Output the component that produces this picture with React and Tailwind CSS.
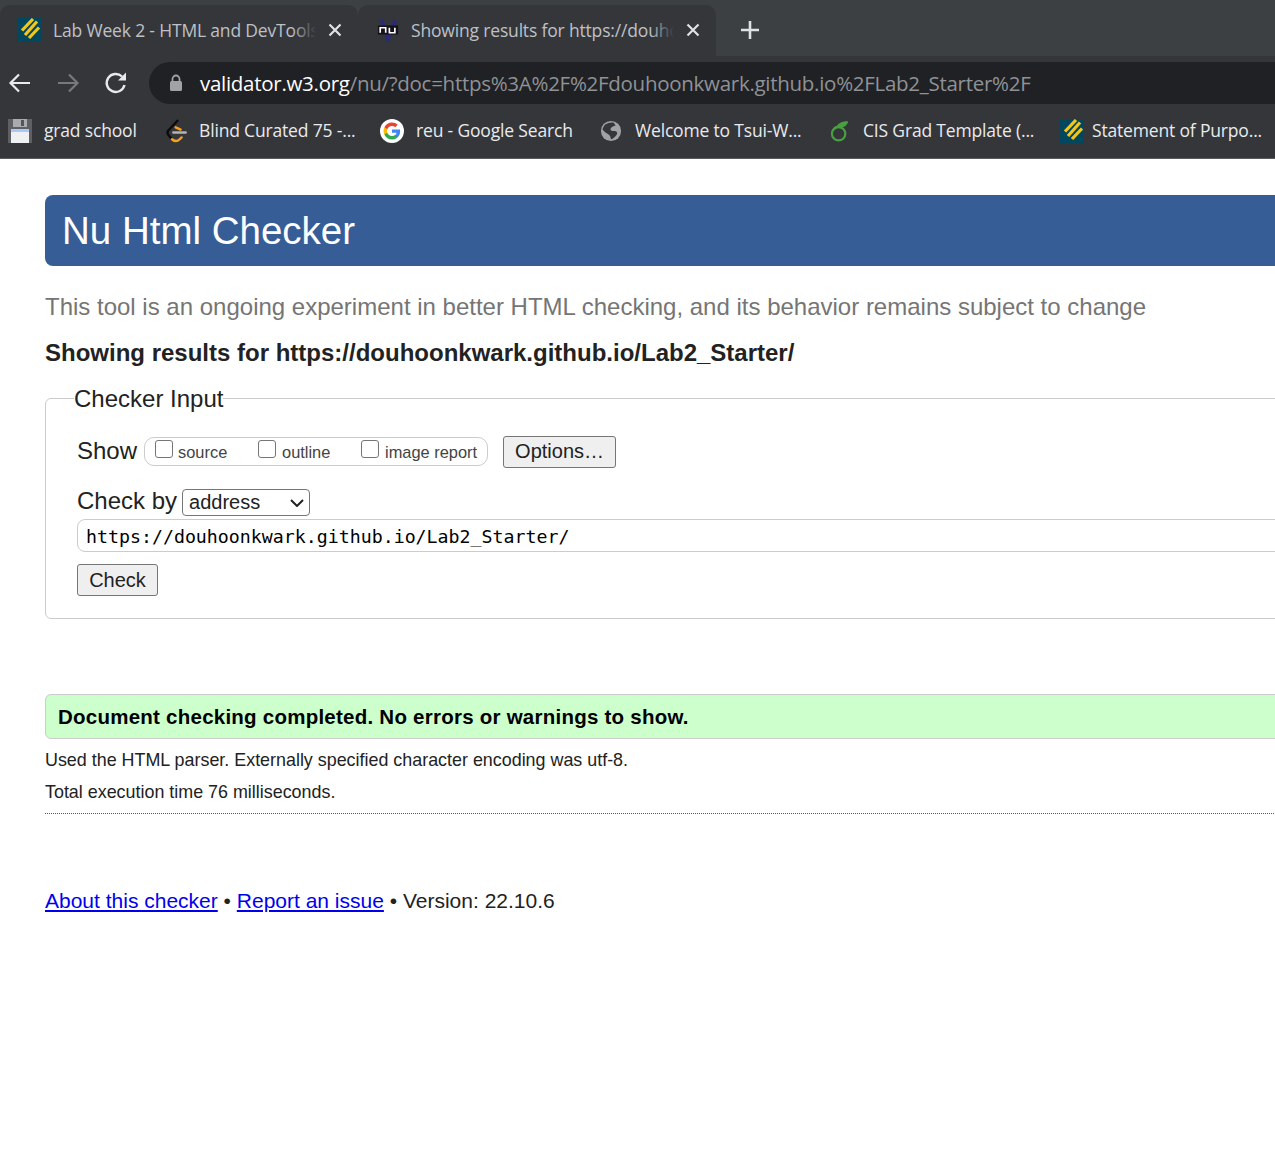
const ui = { fontFamily: '"Open Sans", "Noto Sans", sans-serif' };

const HatchIcon = ({ className = "" }) => (
  <svg viewBox="0 0 24 24" className={className}>
    <rect width="24" height="24" fill="#03475f" />
    <path d="M5 12.500 L16 1 M8 17 L20 3.500 M12 20 L22 9.500" stroke="#f5c518" strokeWidth="3.200" fill="none" />
  </svg>
);

const NuIcon = () => (
  <svg viewBox="0 0 24 24" className="w-[22px] h-[24px] shrink-0">
    <path d="M5 1 L12 22 L20 1" stroke="#2a2a78" strokeWidth="4" fill="none" />
    <rect x="1" y="7" width="22" height="10" fill="#14131c" />
    <path d="M3.500 15 V9.500 H9.500 V15 M13.500 9.500 V15 H19.500 V9.500" stroke="#fff" strokeWidth="1.800" fill="none" />
  </svg>
);

const CloseIcon = () => (
  <svg viewBox="0 0 14 14" className="w-[14px] h-[14px] shrink-0">
    <path d="M1.500 1.500 L12.500 12.500 M12.500 1.500 L1.500 12.500" stroke="#dfe1e5" strokeWidth="2.200" />
  </svg>
);

const Floppy = () => (
  <svg viewBox="0 0 24 24" className="w-[24px] h-[24px] shrink-0">
    <path d="M0 0 H24 V24 H0 Z" fill="#5f6063" />
    <rect x="5" y="0" width="14" height="8" fill="#a9abae" />
    <rect x="13" y="1" width="3" height="6" fill="#55565a" />
    <rect x="3" y="10" width="18" height="14" fill="#eef0f2" />
    <rect x="3" y="10" width="18" height="3" fill="#a8c7fa" />
  </svg>
);

const LeetIcon = () => (
  <svg viewBox="0 0 24 24" className="w-[22px] h-[24px] shrink-0" fill="none" strokeWidth="2.600" strokeLinecap="round" strokeLinejoin="round">
    <path d="M12.500 0.800 L2.500 11.500 Q0.800 13.500 2.500 16 L6.500 21" stroke="#0b0b0b" />
    <path d="M6.500 21 Q11 25 15 21 L17 19" stroke="#f89f1b" />
    <path d="M10.500 8 L16 10.500" stroke="#f89f1b" />
    <path d="M8 13.700 H21.500" stroke="#b3b3b3" />
  </svg>
);

const GoogleIcon = () => (
  <svg viewBox="0 0 24 24" className="w-[24px] h-[24px] shrink-0">
    <circle cx="12" cy="12" r="12" fill="#fff" />
    <g transform="translate(3.500 3.500) scale(0.708)">
      <path fill="#4285F4" d="M23.500 12.300c0-.8-.1-1.600-.2-2.300H12v4.400h6.500c-.3 1.500-1.100 2.700-2.400 3.600v3h3.900c2.200-2.100 3.500-5.100 3.500-8.700z" />
      <path fill="#34A853" d="M12 24c3.200 0 6-1.100 8-2.900L16.100 18c-1.100.7-2.500 1.200-4.100 1.200-3.100 0-5.800-2.100-6.700-5H1.300v3.100C3.300 21.300 7.300 24 12 24z" />
      <path fill="#FBBC05" d="M5.300 14.300c-.3-.7-.4-1.500-.4-2.300s.1-1.600.4-2.300V6.600H1.300C.5 8.200 0 10 0 12s.5 3.800 1.300 5.400l4-3.100z" />
      <path fill="#EA4335" d="M12 4.800c1.800 0 3.300.6 4.600 1.800l3.400-3.400C18 1.200 15.200 0 12 0 7.300 0 3.300 2.700 1.300 6.600l4 3.100c.9-2.800 3.600-4.900 6.700-4.900z" />
    </g>
  </svg>
);

const GlobeIcon = () => (
  <svg viewBox="0 0 24 24" className="w-[22px] h-[22px] shrink-0">
    <circle cx="12" cy="12" r="11" fill="#a0a2a6" />
    <path d="M6 4.500 C9 3 12 2.500 15 3 L17 6 C15 6.500 12.500 7.500 11.500 9.500 C11 11 12.500 12 15 12 C18 12 19.500 13.500 18.500 15.500 C17 18 14 20.500 12 21 L11 17.500 C10 15.500 7.500 14.500 6 13.500 L2.800 10.500 C3 8 4.500 6 6 4.500 Z" fill="#35363a" />
  </svg>
);

const SproutIcon = () => (
  <svg viewBox="0 0 24 24" className="w-[22px] h-[24px] shrink-0" fill="none">
    <circle cx="10.500" cy="15" r="7.300" stroke="#47a141" strokeWidth="2.400" />
    <path d="M4.500 11 C6 8 8 7 11 7.500" stroke="#47a141" strokeWidth="2.200" />
    <path d="M8.500 7 C10 3.500 15 1 21 1.500 C20 5.500 16 9.500 9 8 Z" fill="#47a141" />
  </svg>
);

const tabs = [
  { icon: <HatchIcon className="w-[24px] h-[24px] shrink-0" />, label: "Lab Week 2 - HTML and DevTools", gap: "gap-3", pl: "pl-[17px]", w: "w-[263px]" },
  { icon: <NuIcon />, label: "Showing results for https://douhoonkwark.github.io", gap: "gap-3", pl: "pl-[19px]", w: "w-[263px]" },
];

const bookmarks = [
  { icon: <Floppy />, label: "grad school", w: "w-[94px]", ml: "ml-[8px]", gap: "gap-3" },
  { icon: <LeetIcon />, label: "Blind Curated 75 -...", w: "w-[158px]", ml: "ml-[28px]", gap: "gap-[11px]" },
  { icon: <GoogleIcon />, label: "reu - Google Search", w: "w-[160px]", ml: "ml-[23px]", gap: "gap-3" },
  { icon: <GlobeIcon />, label: "Welcome to Tsui-W...", w: "w-[169px]", ml: "ml-[24px]", gap: "gap-[13px]" },
  { icon: <SproutIcon />, label: "CIS Grad Template (...", w: "w-[171px]", ml: "ml-[25px]", gap: "gap-3" },
  { icon: <HatchIcon className="w-[24px] h-[24px] shrink-0" />, label: "Statement of Purpo...", w: "w-[170px]", ml: "ml-[26px]", gap: "gap-2" },
];

const Browser = () => (
  <div style={ui} className="bg-[#35363a] border-b border-[#5b5c5f]">
    {/* Tab strip */}
    <div className="h-[56px] bg-[#3c4043] flex pt-[5px]">
      {tabs.map((t) => (
        <div key={t.label} className={`w-[358px] last:w-[360px] h-[51px] bg-[#35363a] rounded-t-[10px] flex items-center ${t.gap} ${t.pl} pb-[1px]`}>
          {t.icon}
          <div className={`relative ${t.w} h-[26px] leading-[26px] overflow-hidden whitespace-nowrap text-[17.500px] tracking-[-0.17px] text-[#bdc1c6]`}>
            {t.label}
            <div className="absolute inset-y-0 right-0 w-[24px] bg-linear-to-r from-transparent to-[#35363a]" />
          </div>
          <CloseIcon />
        </div>
      ))}
      <div className="ml-[25px] flex items-center pb-[2px]">
        <svg viewBox="0 0 18 18" className="w-[18px] h-[18px]">
          <path d="M9 0 V18 M0 9 H18" stroke="#dfe1e5" strokeWidth="2.600" />
        </svg>
      </div>
    </div>
    {/* Toolbar */}
    <div className="h-[48px] pt-[6px] flex items-center">
      <div className="flex items-center gap-[24px] pl-[8px] pr-[21px]">
        <svg viewBox="0 0 24 24" className="w-[24px] h-[24px]" fill="none" stroke="#e8eaed" strokeWidth="2.200">
          <path d="M22 12 H3 M11 3.500 L2.500 12 L11 20.500" />
        </svg>
        <svg viewBox="0 0 24 24" className="w-[24px] h-[24px]" fill="none" stroke="#77797c" strokeWidth="2.200">
          <path d="M2 12 H21 M13 3.500 L21.500 12 L13 20.500" />
        </svg>
        <svg viewBox="0 0 24 24" className="w-[24px] h-[24px]" fill="none" stroke="#e8eaed" strokeWidth="2.400">
          <path d="M20.500 14 A9 9 0 1 1 18 5.500" />
          <path d="M22 1.500 V9.500 H14 Z" fill="#e8eaed" stroke="none" />
        </svg>
      </div>
      <div className="flex-1 h-[42px] bg-[#202124] rounded-l-[21px] flex items-center pl-[20px] whitespace-nowrap text-[20.500px] tracking-[-0.28px]">
        <svg viewBox="0 0 14 18" className="w-[14px] h-[18px] mr-[17px] shrink-0">
          <path d="M3.500 8 V5 A3.500 3.500 0 0 1 10.500 5 V8" fill="none" stroke="#a0a2a6" strokeWidth="1.800" />
          <rect x="1" y="7" width="12" height="10" rx="1.500" fill="#a0a2a6" />
        </svg>
        <span className="text-white">validator.w3.org</span>
        <span className="text-[#8f9296]">/nu/?doc=https%3A%2F%2Fdouhoonkwark.github.io%2FLab2_Starter%2F</span>
      </div>
    </div>
    {/* Bookmarks */}
    <div className="h-[54px] flex items-center pb-[1px]">
      {bookmarks.map((b) => (
        <div key={b.label} className={`flex items-center ${b.gap} ${b.ml}`}>
          {b.icon}
          <span className={`${b.w} whitespace-nowrap text-[17.500px] tracking-[-0.17px] text-[#e8eaed]`}>{b.label}</span>
        </div>
      ))}
    </div>
  </div>
);

const Checkbox = () => (
  <input type="checkbox" className="appearance-none w-[18px] h-[18px] border border-[#767676] rounded-[3px] bg-white -mt-[5px] shrink-0" />
);

const Checker = () => (
  <div className="pl-[45px] w-[1400px] font-['Liberation_Sans',Arial,sans-serif] text-[#222]">
    <h1 className="mt-[36px] h-[71px] bg-[#365d95] text-white rounded-l-[8px] pl-[17px] flex items-center text-[38.500px] font-normal pt-[1px]">
      Nu Html Checker
    </h1>
    <p className="mt-[25px] text-[24px] leading-[32px] text-[#757575]">
      This tool is an ongoing experiment in better HTML checking, and its behavior remains subject to change
    </p>
    <p className="mt-[14px] text-[24px] leading-[32px] font-bold">
      Showing results for https://douhoonkwark.github.io/Lab2_Starter/
    </p>

    <fieldset className="mt-[14px] border border-[#ccc] rounded-[6px] pl-[31px] h-[236px]">
      <legend className="text-[24px] leading-[28px] pt-[2px] -ml-[3px] px-0">Checker Input</legend>
      <div className="mt-[22px] flex items-center h-[34px]">
        <span className="text-[24px] -mt-[3px]">Show</span>
        <div className="ml-[7px] -mt-[1px] h-[29px] w-[344px] border border-[#ccc] rounded-[10px] flex items-center text-[16.400px] text-[#444] pl-[10px]">
          <Checkbox />
          <label className="ml-[5px] w-[80px] mt-[1px]">source</label>
          <Checkbox />
          <label className="ml-[6px] w-[79px] mt-[1px]">outline</label>
          <Checkbox />
          <label className="ml-[6px] mt-[1px]">image report</label>
        </div>
        <button className="ml-[15px] -mt-[1px] w-[113px] h-[32px] bg-[#efefef] border border-[#767676] rounded-[3px] text-[20px] leading-none text-[#222] pb-[2px]">
          Options…
        </button>
      </div>
      <div className="mt-[18px] flex items-center h-[30px]">
        <span className="text-[24px] -mt-[2px]">Check by</span>
        <div className="relative ml-[5px] w-[128px] h-[27px]">
          <select className="appearance-none w-full h-full bg-white border border-[#767676] rounded-[4px] text-[20px] leading-none pl-[6px] text-[#222]">
            <option>address</option>
          </select>
          <svg viewBox="0 0 14 8" className="absolute right-[6px] top-[10px] w-[14px] h-[8px]" fill="none" stroke="#222" strokeWidth="2">
            <path d="M1 1 L7 7 L13 1" />
          </svg>
        </div>
      </div>
      <input
        readOnly
        value="https://douhoonkwark.github.io/Lab2_Starter/"
        className="block mt-[2px] w-full h-[33px] border border-[#ccc] rounded-l-[8px] pl-[8px] pt-[2px] font-['DejaVu_Sans_Mono',monospace] text-[18.250px] text-black"
      />
      <button className="block mt-[12px] w-[81px] h-[32px] bg-[#efefef] border border-[#767676] rounded-[3px] text-[20px] leading-none text-[#222] pb-[1px]">
        Check
      </button>
    </fieldset>

    <div className="mt-[75px] h-[45px] bg-[#ccffcc] border border-[#ccc] rounded-l-[6px] pl-[12px] flex items-center text-[20.500px] tracking-[0.24px] font-bold text-black pt-[1px]">
      Document checking completed. No errors or warnings to show.
    </div>
    <p className="mt-[9px] text-[17.900px] leading-[24px]">Used the HTML parser. Externally specified character encoding was utf-8.</p>
    <p className="mt-[8px] text-[17.900px] leading-[24px]">Total execution time 76 milliseconds.</p>
    <div className="mt-[9px] border-t border-dotted border-[#555]" />
    <p className="mt-[74px] text-[21px] leading-[26px] whitespace-nowrap">
      <a href="#about" className="text-[#0000ee] underline">About this checker</a>
      {" • "}
      <a href="#issue" className="text-[#0000ee] underline">Report an issue</a>
      {" • Version: 22.10.6"}
    </p>
  </div>
);

export default function App() {
  return (
    <div className="h-[1168px] bg-white overflow-hidden">
      <Browser />
      <Checker />
    </div>
  );
}
